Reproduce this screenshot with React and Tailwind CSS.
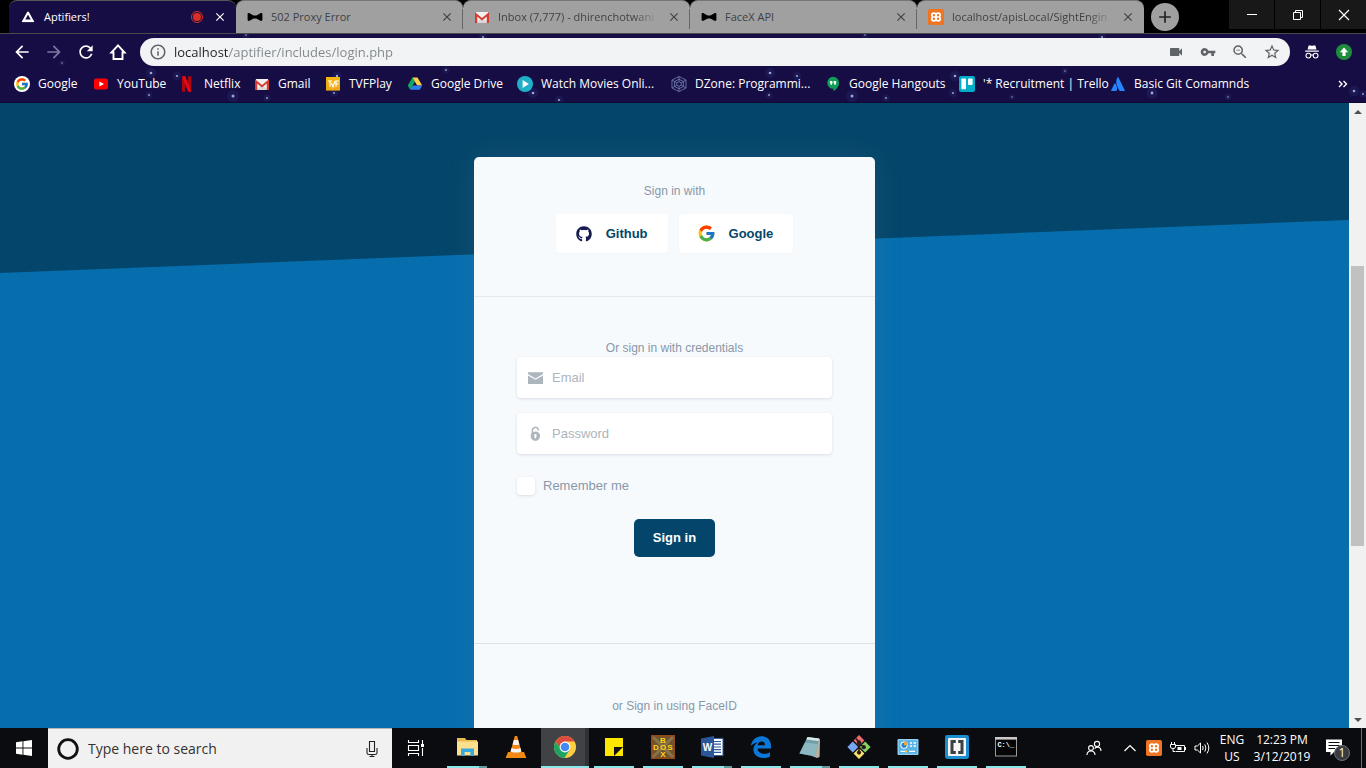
import React from "react";
import {
  MdArrowBack,
  MdArrowForward,
  MdRefresh,
  MdInfoOutline,
  MdVideocam,
  MdVpnKey,
  MdZoomOut,
  MdStarBorder,
  MdClose,
  MdAdd,
} from "react-icons/md";
import { FcGoogle } from "react-icons/fc";
import { FaGithub, FaAtlassian } from "react-icons/fa";

/* ---------- favicons ---------- */

function AptifiersIcon() {
  return (
    <svg viewBox="0 0 16 16" className="size-4">
      <path d="M8 3.6 L12.4 11.6 H3.6 Z" fill="none" stroke="#fff" strokeWidth="2" strokeLinejoin="round" />
      <path d="M2 12.3 H14" stroke="#fff" strokeWidth="1.6" />
    </svg>
  );
}

function BowTieIcon() {
  return (
    <svg viewBox="0 0 16 16" className="size-4">
      <path d="M0.6 5.2 C0.6 4 2 3.9 3 4.4 L6.6 6.4 H9.4 L13 4.4 C14 3.9 15.4 4 15.4 5.2 V10.8 C15.4 12 14 12.1 13 11.6 L9.4 9.6 H6.6 L3 11.6 C2 12.1 0.6 12 0.6 10.8 Z" fill="#000" />
    </svg>
  );
}

function GmailIcon() {
  return (
    <svg viewBox="0 0 16 16" className="size-4">
      <path d="M2 3 H14 V14 H2 Z" fill="#f1f1f1" />
      <path d="M2 14 L8 8.5 L14 14 Z" fill="#d9d9d9" />
      <path d="M1 14 V3.2 L8 9 L15 3.2 V14 H12.8 V7.4 L8 11.4 L3.2 7.4 V14 Z" fill="#d93a2f" />
    </svg>
  );
}

function XamppIcon() {
  return (
    <svg viewBox="0 0 16 16" className="size-4">
      <rect width="16" height="16" rx="1.8" fill="#ee7623" />
      <g fill="none" stroke="#fff" strokeWidth="1.7">
        <path d="M7.8 8 H5.6 M8.2 8 H10.4" />
        <path d="M8 8 V6.2 Q8 4.2 5.9 4.2 Q3.8 4.2 3.8 6 Q3.8 7.2 4.8 8 Q3.8 8.8 3.8 10 Q3.8 11.8 5.9 11.8 Q8 11.8 8 9.8 Z" />
        <path d="M8 8 V6.2 Q8 4.2 10.1 4.2 Q12.2 4.2 12.2 6 Q12.2 7.2 11.2 8 Q12.2 8.8 12.2 10 Q12.2 11.8 10.1 11.8 Q8 11.8 8 9.8 Z" />
      </g>
    </svg>
  );
}

function RecordIcon() {
  return (
    <svg viewBox="0 0 14 14" className="size-3.5">
      <circle cx="7" cy="7" r="5.5" fill="none" stroke="#d93025" strokeWidth="1" />
      <circle cx="7" cy="7" r="4" fill="#d93025" />
    </svg>
  );
}

function GoogleBadge() {
  return (
    <span className="flex size-4 items-center justify-center rounded-full bg-white">
      <FcGoogle size={14} />
    </span>
  );
}

function YouTubeIcon() {
  return (
    <svg viewBox="0 0 16 16" className="size-4">
      <rect x="1" y="2.4" width="14" height="11.2" rx="2.4" fill="#f00" />
      <path d="M6.4 5.4 L11 8 L6.4 10.6 Z" fill="#fff" />
    </svg>
  );
}

function NetflixIcon() {
  return (
    <svg viewBox="0 0 16 16" className="size-4">
      <path d="M2 0.3 H5.3 V15.4 L2 15.8 Z M8.1 0.3 H11.3 V15.8 L8.1 15.4 Z" fill="#b1060f" />
      <path d="M2 0.3 H5.3 L11.3 15.8 L8.1 15.4 Z" fill="#e50914" />
    </svg>
  );
}

function TvfIcon() {
  return (
    <svg viewBox="0 0 16 16" className="size-4">
      <rect x="1" y="1" width="14" height="13.5" fill="#f5b50f" />
      <path d="M1 4.5 V14.5 H15 V11 Z" fill="#e8951b" opacity="0.4" />
      <path d="M3 5 H7 M5 5 V11 M6.5 7 L8 11 L10 5 M11 11 V5 H14 M11 8 H13.4" fill="none" stroke="#fff" strokeWidth="1.2" />
    </svg>
  );
}

function DriveIcon() {
  return (
    <svg viewBox="0 0 16 16" className="size-4">
      <path d="M5.4 1.5 L0.8 9.6 L3.2 13.8 L7.9 5.8 Z" fill="#11a861" />
      <path d="M5.4 1.5 H10.5 L15.2 9.6 H10.2 Z" fill="#ffcf48" />
      <path d="M5.7 9.6 H15.2 L12.8 13.8 H3.2 Z" fill="#2d7ff0" />
    </svg>
  );
}

function PlayIcon() {
  return (
    <svg viewBox="0 0 16 16" className="size-4">
      <circle cx="8" cy="8" r="8" fill="#1fb0c8" />
      <path d="M5.6 4 L11.8 8 L5.6 12 Z" fill="#fff" />
    </svg>
  );
}

function DZoneIcon() {
  return (
    <svg viewBox="0 0 16 16" className="size-4">
      <g fill="none" stroke="#6b78ad" strokeWidth="0.9">
        <path d="M8 0.5 L15 4 V12 L8 15.5 L1 12 V4 Z" />
        <path d="M8 3.2 L12.4 5.5 V10.5 L8 12.8 L3.6 10.5 V5.5 Z" />
        <path d="M8 5.6 L10.2 6.8 V9.2 L8 10.4 L5.8 9.2 V6.8 Z M8 0.5 V5.6 M1 4 L5.8 6.8 M15 4 L10.2 6.8 M1 12 L5.8 9.2 M15 12 L10.2 9.2 M8 10.4 V15.5" />
      </g>
    </svg>
  );
}

function HangoutsIcon() {
  return (
    <svg viewBox="0 0 16 16" className="size-4">
      <path d="M8 0.8 A6 6 0 0 1 14 6.9 C14 10.6 11.4 13.4 8.4 15.2 V12.8 A6 6 0 0 1 8 0.8 Z" fill="#109d58" />
      <path d="M4.9 5 H7.4 V7.4 L6.4 9 H5.4 L6 7.4 H4.9 Z M8.6 5 H11.1 V7.4 L10.1 9 H9.1 L9.7 7.4 H8.6 Z" fill="#fff" />
    </svg>
  );
}

function TrelloIcon() {
  return (
    <svg viewBox="0 0 16 16" className="size-4">
      <rect width="16" height="16" rx="2" fill="#00aecc" />
      <rect x="2.4" y="2.4" width="4.6" height="10.8" rx="0.8" fill="#fff" />
      <rect x="9" y="2.4" width="4.6" height="6.6" rx="0.8" fill="#fff" />
    </svg>
  );
}

/* ---------- tab strip ---------- */

const TABS = [
  { title: "Aptifiers!", icon: <AptifiersIcon />, active: true },
  { title: "502 Proxy Error", icon: <BowTieIcon /> },
  { title: "Inbox (7,777) - dhirenchotwani", icon: <GmailIcon />, fade: true },
  { title: "FaceX API", icon: <BowTieIcon /> },
  { title: "localhost/apisLocal/SightEngin", icon: <XamppIcon />, fade: true },
];

function Tab({ tab, divider }) {
  const look = tab.active
    ? "rounded-t-lg border-t border-[#555] bg-[#170d45] text-white"
    : "rounded-t-lg border-t border-[#777] bg-[#a0a0a0] text-[#3f4144]";
  return (
    <div className={"min-w-0 flex-1 " + look}>
      <div className={"flex h-full items-center " + (divider ? "bg-[linear-gradient(#666,#666)] bg-[length:1px_20px] bg-[position:right_8px] bg-no-repeat" : "")}>
        <span className="ml-[11px] flex w-6 shrink-0">{tab.icon}</span>
        <span className={"min-w-0 flex-1 whitespace-nowrap text-[11px] leading-4 " + (tab.fade ? "mask-[linear-gradient(90deg,#000_85%,transparent)]" : "")}>
          {tab.title}
        </span>
        {tab.active && <RecordIcon />}
        <button aria-label={"Close " + tab.title} className="mr-2 ml-2 flex size-4 shrink-0 items-center justify-center">
          <MdClose size={14} />
        </button>
      </div>
    </div>
  );
}

function WindowControls() {
  const cls = "flex h-[29px] w-[45px] items-center justify-center bg-[#181818]";
  return (
    <div className="ml-auto flex shrink-0 gap-px">
      <button aria-label="Minimize" className={cls}>
        <svg viewBox="0 0 12 12" className="size-3"><path d="M1 5.5 H11" stroke="#fff" /></svg>
      </button>
      <button aria-label="Restore" className={cls}>
        <svg viewBox="0 0 12 12" className="size-3"><path d="M1.5 3.5 H8.5 V10.5 H1.5 Z M3.5 3.5 V1.5 H10.5 V8.5 H8.5" fill="none" stroke="#fff" /></svg>
      </button>
      <button aria-label="Close window" className={cls}>
        <svg viewBox="0 0 12 12" className="size-3"><path d="M1 1 L11 11 M11 1 L1 11" stroke="#fff" strokeWidth="1.2" /></svg>
      </button>
    </div>
  );
}

function TabStrip() {
  return (
    <div className="flex h-[34px] shrink-0 items-start border-b border-[#4a4a4a] bg-black pl-[9px]">
      <div className="flex h-full max-w-[1135px] min-w-0 flex-1">
        {TABS.map((t, i) => (
          <Tab key={t.title} tab={t} divider={i > 0 && i < TABS.length - 1} />
        ))}
      </div>
      <button aria-label="New tab" className="mt-[3px] ml-[7px] flex size-7 shrink-0 items-center justify-center rounded-full bg-[#a0a0a0] text-[#222]">
        <MdAdd size={20} />
      </button>
      <WindowControls />
    </div>
  );
}

/* ---------- toolbar ---------- */

const STARS = [
  [151, 39, 1.3], [177, 42, 1.1], [149, 61, 0.9], [233, 62, 1.5], [267, 64, 0.9], [337, 42, 1.2], [334, 59, 0.9],
  [446, 36, 0.9], [483, 3, 1], [533, 59, 1.3], [559, 66, 1.1], [770, 39, 1.3], [797, 42, 1.1], [769, 61, 0.9],
  [852, 62, 1.5], [886, 64, 0.9], [865, 1, 0.8], [955, 42, 1.3], [953, 59, 1], [1065, 37, 0.8], [1012, 63, 0.7],
  [1102, 3, 1], [1152, 59, 1.4], [1228, 63, 0.8], [1354, 57, 1.3], [1363, 60, 0.9], [246, 1, 0.8], [62, 29, 0.7],
];

function Stars() {
  return (
    <svg className="pointer-events-none absolute inset-0 h-full w-full" aria-hidden="true">
      {STARS.map(([x, y, r]) => (
        <g key={x + "-" + y}>
          <circle cx={x} cy={y} r={r * 4} fill="#3457a8" opacity="0.15" />
          <circle cx={x} cy={y} r={r} fill="#b9c0e6" opacity="0.85" />
        </g>
      ))}
    </svg>
  );
}

function ToolButton({ label, children, dim }) {
  return (
    <button aria-label={label} className={"flex h-7 w-8 shrink-0 items-center justify-center " + (dim ? "text-[#7d78a0]" : "text-white")}>
      {children}
    </button>
  );
}

function OmniButton({ label, children }) {
  return (
    <button aria-label={label} className="flex h-7 w-8 shrink-0 items-center justify-center text-[#5f6368]">
      {children}
    </button>
  );
}

function Toolbar() {
  return (
    <div className="relative flex items-center gap-1.5 px-1.5 pt-1">
      <div className="flex">
        <ToolButton label="Back"><MdArrowBack size={20} /></ToolButton>
        <ToolButton label="Forward" dim><MdArrowForward size={20} /></ToolButton>
        <ToolButton label="Reload"><MdRefresh size={20} /></ToolButton>
        <ToolButton label="Home">
          <svg viewBox="0 0 18 18" className="size-[18px]">
            <path d="M9 2.4 L2.4 9.5 H4.5 V16 H13.5 V9.5 H15.6 Z" fill="none" stroke="#fff" strokeWidth="1.9" />
          </svg>
        </ToolButton>
      </div>
      <div className="flex h-7 min-w-0 flex-1 items-center rounded-full bg-[#f1f3f4] pr-0.5">
        <span className="flex w-[34px] shrink-0 pl-[9px] text-[#5f6368]"><MdInfoOutline size={18} /></span>
        <input
          aria-label="Address"
          defaultValue="localhost/aptifier/includes/login.php"
          className="min-w-0 flex-1 bg-[linear-gradient(90deg,#202124_54px,#80868b_54px)] bg-clip-text text-[13px] leading-5 text-transparent outline-none"
        />
        <OmniButton label="Camera"><MdVideocam size={16} /></OmniButton>
        <OmniButton label="Saved passwords"><MdVpnKey size={16} /></OmniButton>
        <OmniButton label="Zoom out"><MdZoomOut size={18} /></OmniButton>
        <OmniButton label="Bookmark"><MdStarBorder size={18} /></OmniButton>
      </div>
      <div className="flex">
        <ToolButton label="Incognito">
          <svg viewBox="0 0 16 16" className="size-4">
            <path d="M4.6 1.5 H7 L8 2 L9 1.5 H11.4 L12.4 5.4 H3.6 Z M1.2 6.5 H14.8 V7.7 H1.2 Z" fill="#fff" />
            <g fill="none" stroke="#fff" strokeWidth="1.1">
              <circle cx="4.4" cy="11.6" r="2.4" />
              <circle cx="11.6" cy="11.6" r="2.4" />
              <path d="M6.8 11.2 Q8 10.4 9.2 11.2" />
            </g>
          </svg>
        </ToolButton>
        <ToolButton label="Update">
          <svg viewBox="0 0 16 16" className="size-4">
            <circle cx="8" cy="8" r="8" fill="#1e8e3e" />
            <path d="M8 3.6 L12.2 8.2 H9.6 V12 H6.4 V8.2 H3.8 Z" fill="#fff" />
          </svg>
        </ToolButton>
      </div>
    </div>
  );
}

const BOOKMARKS = [
  ["Google", <GoogleBadge />],
  ["YouTube", <YouTubeIcon />],
  ["Netflix", <NetflixIcon />],
  ["Gmail", <GmailIcon />],
  ["TVFPlay", <TvfIcon />],
  ["Google Drive", <DriveIcon />],
  ["Watch Movies Onli...", <PlayIcon />],
  ["DZone: Programmi...", <DZoneIcon />],
  ["Google Hangouts", <HangoutsIcon />],
  ["'* Recruitment | Trello", <TrelloIcon />],
  ["Basic Git Comamnds", <FaAtlassian size={14} color="#2684ff" className="mx-px" />],
];

function Bookmarks() {
  return (
    <nav aria-label="Bookmarks" className="relative flex h-9 items-center justify-between pr-[18px] pl-3.5">
      <div className="grid grid-cols-[79px_87px_74px_71px_82px_110px_154px_154px_134px_151px_150px] text-xs text-white">
        {BOOKMARKS.map(([label, icon]) => (
          <a key={label} href="#" className="flex items-center gap-2 whitespace-nowrap">
            <span className="shrink-0">{icon}</span>
            {label}
          </a>
        ))}
      </div>
      <button aria-label="More bookmarks" className="flex text-white">
        <svg viewBox="0 0 10 8" className="h-2 w-2.5">
          <path d="M1 1 L4 4 L1 7 M5.5 1 L8.5 4 L5.5 7" fill="none" stroke="#fff" strokeWidth="1.4" />
        </svg>
      </button>
    </nav>
  );
}

/* ---------- login page ---------- */

function SocialButton({ icon, children }) {
  return (
    <button className="flex h-[39px] items-center gap-3.5 rounded bg-white px-5 text-[13px] font-bold text-[#04466b] shadow-[0_1px_2px_rgba(50,50,93,0.03)]">
      <span className="flex size-4 items-center justify-center">{icon}</span>
      <span>{children}</span>
    </button>
  );
}

function Field({ id, type, label, icon }) {
  return (
    <div className="flex h-[41px] items-center rounded bg-white pl-[11px] text-[#adb5bd] shadow-[0_1px_3px_rgba(50,50,93,0.15)]">
      <label htmlFor={id} aria-label={label} className="flex w-6 shrink-0">{icon}</label>
      <input
        id={id}
        type={type}
        placeholder={label}
        className="h-full min-w-0 flex-1 bg-transparent text-[13px] outline-none placeholder:text-[#adb5bd]"
      />
    </div>
  );
}

function LoginCard() {
  return (
    <form
      onSubmit={(e) => e.preventDefault()}
      className="relative mx-auto w-full max-w-[401px] rounded-[5px] bg-[#f7fafc] text-center text-xs leading-[18px] text-[#8898aa] shadow-[0_0_29px_rgba(136,152,170,0.13)]"
    >
      <section className="border-b border-[#e6eaee] px-[43px] pt-[25px] pb-[43px]">
        <p>Sign in with</p>
        <div className="mt-3.5 flex justify-center gap-[11px]">
          <SocialButton icon={<FaGithub size={16} color="#161b50" />}>Github</SocialButton>
          <SocialButton icon={<FcGoogle size={19} className="shrink-0" />}>Google</SocialButton>
        </div>
      </section>
      <section className="border-b border-[#dde2e7] px-[43px] pt-[42px] pb-[86px]">
        <p>Or sign in with credentials</p>
        <div className="flex flex-col gap-[15px]">
          <Field
            id="email"
            type="email"
            label="Email"
            icon={
              <svg viewBox="0 0 16 16" className="size-4">
                <path d="M0 2.2 H15 V4 L7.5 8.4 L0 4 Z M0 5.4 L7.5 9.8 L15 5.4 V14 H0 Z" fill="#adb5bd" />
              </svg>
            }
          />
          <Field
            id="password"
            type="password"
            label="Password"
            icon={
              <svg viewBox="0 0 16 16" className="size-4">
                <path d="M4.4 8 V4.4 A3 3 0 0 1 10.3 3.6 V4.6" fill="none" stroke="#adb5bd" strokeWidth="1.5" />
                <path fillRule="evenodd" d="M7.4 5.4 A4.7 4.7 0 1 1 7.3 5.4 Z M7.4 8 A1.5 1.5 0 0 0 6.6 10.6 V12.2 H8.2 V10.6 A1.5 1.5 0 0 0 7.4 8 Z" fill="#adb5bd" />
              </svg>
            }
          />
        </div>
        <div className="mt-[22px] flex h-5 items-center gap-2">
          <input
            id="remember"
            type="checkbox"
            className="size-[18px] appearance-none rounded bg-white shadow-[0_1px_3px_rgba(50,50,93,0.15)] checked:bg-[#04466b]"
          />
          <label htmlFor="remember" className="text-[13px]">Remember me</label>
        </div>
        <button type="submit" className="mt-[23px] h-[38px] rounded-[5px] bg-[#04466b] px-[19px] text-[13px] font-bold text-white">
          Sign in
        </button>
      </section>
      <section className="px-[43px] pt-[53px] pb-20">
        <p>or Sign in using FaceID</p>
      </section>
    </form>
  );
}

function Scrollbar() {
  return (
    <div className="flex w-[17px] shrink-0 flex-col bg-[#f1f1f1] px-0.5">
      <button aria-label="Scroll up" className="flex h-[17px] items-center justify-center">
        <svg viewBox="0 0 8 4" className="h-1 w-2"><path d="M0 4 L4 0 L8 4 Z" fill="#505050" /></svg>
      </button>
      <div className="flex-[146]" />
      <div className="flex-[280] bg-[#c1c1c1]" />
      <div className="flex-[165]" />
      <button aria-label="Scroll down" className="flex h-[17px] items-center justify-center">
        <svg viewBox="0 0 8 4" className="h-1 w-2"><path d="M0 0 L4 4 L8 0 Z" fill="#505050" /></svg>
      </button>
    </div>
  );
}

/* ---------- taskbar ---------- */

function ExplorerIcon() {
  return (
    <svg viewBox="0 0 24 24" className="size-6">
      <path d="M2 3 H10 L11.5 5 H22 V20 H2 Z" fill="#e9b94f" />
      <path d="M2 6.5 H23 V20.5 H2 Z" fill="#fbe08d" />
      <path d="M6 21 V13.4 H19 V21 H15.4 V17 H9.6 V21 Z" fill="#38a8e0" />
    </svg>
  );
}

function VlcIcon() {
  return (
    <svg viewBox="0 0 24 24" className="size-6">
      <path d="M4 17 H20 L22.4 23 H1.6 Z" fill="#f08a13" />
      <path d="M10.8 1 H13.2 L18 18.4 Q12 21.4 6 18.4 Z" fill="#f3861a" />
      <path d="M9.9 5 H14.1 L15.3 9.4 Q12 10.8 8.6 9.4 Z M7.6 13 Q12 15.2 16.4 13 L17.3 16.4 Q12 18.8 6.6 16.4 Z" fill="#f4f4f4" />
    </svg>
  );
}

function ChromeIcon() {
  return (
    <svg viewBox="0 0 24 24" className="size-6">
      <circle cx="12" cy="12" r="11" fill="#ffcd41" />
      <path d="M2.47 6.5 A11 11 0 0 0 11.4 23 L16.76 14.75 L12 12 L7.24 14.75 Z" fill="#1da362" />
      <path d="M2.47 6.5 A11 11 0 0 1 21.53 6.5 H12 A5.5 5.5 0 0 0 6.6 11 Z" fill="#dd4b3e" />
      <path d="M2.47 6.5 L7.24 14.75 L12 12 L6.6 11 Z" fill="#1da362" />
      <path d="M3 5.7 L6.9 12.2 L12 6.5 Z" fill="#dd4b3e" />
      <circle cx="12" cy="12" r="5.4" fill="#fff" />
      <circle cx="12" cy="12" r="4.3" fill="#4688f1" />
    </svg>
  );
}

function StickyIcon() {
  return (
    <svg viewBox="0 0 24 24" className="size-6">
      <path d="M3 3 H21 V21 H3 Z" fill="#ffe600" />
      <path d="M12 12 H21 L12 21 Z" fill="#111" />
    </svg>
  );
}

function DosBoxIcon() {
  return (
    <svg viewBox="0 0 24 24" className="size-6">
      <rect width="24" height="24" fill="#8f4a1c" />
      <rect x="2" y="2" width="20" height="20" fill="#6b5533" />
      <path d="M2 2 L22 22 M22 2 L2 22" stroke="#8a7447" strokeWidth="3" />
      <g fill="#ffd21a" fontFamily="Liberation Sans, sans-serif" fontSize="8" fontWeight="bold" textAnchor="middle">
        <text x="12" y="7.5">B</text>
        <text x="5" y="14.8">D</text>
        <text x="12" y="14.8">O</text>
        <text x="19" y="14.8">S</text>
        <text x="12" y="22">X</text>
      </g>
    </svg>
  );
}

function WordIcon() {
  return (
    <svg viewBox="0 0 24 24" className="size-6">
      <rect x="12" y="3.4" width="11" height="17.2" fill="#fff" stroke="#2b579a" />
      <path d="M14 6.5 H21 M14 9.2 H21 M14 12 H21 M14 14.7 H21 M14 17.4 H21" stroke="#2b579a" strokeWidth="1.2" />
      <path d="M1 3.4 L14 1 V23 L1 20.6 Z" fill="#2b579a" />
      <text x="7.4" y="15.8" fill="#fff" fontFamily="Liberation Sans, sans-serif" fontSize="10" fontWeight="bold" textAnchor="middle">W</text>
    </svg>
  );
}

function EdgeIcon() {
  return (
    <svg viewBox="0 0 24 24" className="size-6">
      <path d="M1.8 11 C2.8 4.6 7.4 1.2 12.4 1.2 C18.6 1.2 22 5.4 22 11 V13.6 H8.6 C8.8 17.4 12 18.8 15 18.8 C17.4 18.8 19.4 18.2 21 17.2 V21.4 C19 22.4 16.6 23 14 23 C8.4 23 4.4 19.6 4.4 14.6 C4.4 11.4 6 8.8 8.8 7.4 C5.8 7.6 3.4 9 1.8 11 Z M8.8 10.2 H16 C16 7.8 14.8 6.4 12.6 6.4 C10.4 6.4 9 8 8.8 10.2 Z" fill="#0b78d7" fillRule="evenodd" />
    </svg>
  );
}

function NotepadIcon() {
  return (
    <svg viewBox="0 0 24 24" className="size-6">
      <path d="M19 3 L22 4 L21.6 22 L19 23 L14 21 Z" fill="#b9b2a2" />
      <path d="M9.5 2 L21 3.5 L17 21.4 L1.4 18.6 Z" fill="#6f9fab" />
      <path d="M9.5 2 L21 3.5 L20.4 6 L8.4 4.6 Z" fill="#dbe7e8" />
      <path d="M7 7.6 L19.4 9 L17 21.4 L1.4 18.6 Z" fill="#a9d3d8" opacity="0.5" />
    </svg>
  );
}

function GitIcon() {
  return (
    <svg viewBox="0 0 24 24" className="size-6">
      <path d="M12 0 L17.4 5.4 L12 10.8 L6.6 5.4 Z" fill="#f06b6b" />
      <path d="M5.8 6.6 L11.2 12 L5.8 17.4 L0.4 12 Z" fill="#7aa7f5" />
      <path d="M18.2 6.6 L23.6 12 L18.2 17.4 L12.8 12 Z" fill="#88d165" />
      <path d="M12 13.2 L17.4 18.6 L12 24 L6.6 18.6 Z" fill="#fbe36a" />
      <path d="M8.8 3.6 L12 7 V18.4 M12 8 L17 12.6" fill="none" stroke="#2a1a1a" strokeWidth="1.6" />
      <g fill="#2a1a1a">
        <circle cx="12" cy="7.4" r="2.1" />
        <circle cx="12" cy="17.6" r="2.1" />
        <circle cx="16.8" cy="12.2" r="2.1" />
      </g>
    </svg>
  );
}

function ControlPanelIcon() {
  return (
    <svg viewBox="0 0 24 24" className="size-6">
      <rect x="1.5" y="4" width="21" height="16" rx="1" fill="#8fd0f3" />
      <rect x="2.8" y="5.3" width="18.4" height="13.4" fill="#58b4e6" />
      <circle cx="8" cy="10.2" r="3.6" fill="#fff" />
      <circle cx="8" cy="10.2" r="2.6" fill="#1f86cf" />
      <path d="M8 10.2 V6.6 A3.6 3.6 0 0 1 11.6 10.2 Z" fill="#f3a33b" />
      <path d="M14 8 H16 M17.5 8 H20 M14 11 H16 M17.5 11 H20 M4.5 16.4 H11 M13 16.4 H19" stroke="#fff" strokeWidth="1.4" />
      <path d="M9 16.4 H11" stroke="#f8c93a" strokeWidth="2" />
    </svg>
  );
}

function BracketsIcon() {
  return (
    <svg viewBox="0 0 24 24" className="size-6">
      <rect width="24" height="24" rx="2.4" fill="#1d8fd1" />
      <rect x="3" y="3" width="18" height="18" rx="1" fill="#f6f6f6" />
      <path d="M10.8 6.6 H7 V17.4 H10.8 M13.2 6.6 H17 V17.4 H13.2" fill="none" stroke="#3c4043" strokeWidth="3" />
    </svg>
  );
}

function CmdIcon() {
  return (
    <svg viewBox="0 0 24 24" className="size-6">
      <rect x="1.5" y="2.5" width="21" height="18.5" fill="#050505" stroke="#9a9a9a" />
      <rect x="1" y="2" width="22" height="2.6" fill="#c9c9c9" />
      <text x="3.4" y="11.5" fill="#fff" fontFamily="Liberation Mono, monospace" fontSize="7" fontWeight="bold">C:\_</text>
    </svg>
  );
}

const APPS = [
  { name: "File Explorer", icon: <ExplorerIcon />, running: true, stacked: true },
  { name: "VLC media player", icon: <VlcIcon /> },
  { name: "Google Chrome", icon: <ChromeIcon />, active: true },
  { name: "Sticky Notes", icon: <StickyIcon />, running: true },
  { name: "DOSBox", icon: <DosBoxIcon />, running: true },
  { name: "Word", icon: <WordIcon />, running: true, stacked: true },
  { name: "Edge", icon: <EdgeIcon />, running: true },
  { name: "Notepad", icon: <NotepadIcon />, running: true, stacked: true },
  { name: "Git Bash", icon: <GitIcon />, running: true },
  { name: "Control Panel", icon: <ControlPanelIcon />, running: true },
  { name: "Brackets", icon: <BracketsIcon />, running: true },
  { name: "Command Prompt", icon: <CmdIcon />, running: true },
];

function AppButton({ app }) {
  return (
    <button
      aria-label={app.name}
      className={"flex h-10 w-12 shrink-0 flex-col items-center " + (app.active ? "bg-[linear-gradient(90deg,#414245_44px,#303134_44px)]" : "")}
    >
      <span className="flex flex-1 items-center justify-center">{app.icon}</span>
      <span className={"flex h-0.5 " + (app.active ? "w-full bg-[#8ae6e8]" : app.running ? "w-10 justify-end bg-[#8ae6e8]" : "w-10")}>
        {app.stacked && <span className="w-2 bg-[#5f9c9e]" />}
      </span>
    </button>
  );
}

function Taskbar() {
  const tray = "flex h-10 w-6 items-center justify-center";
  return (
    <footer className="flex h-10 shrink-0 items-center overflow-hidden bg-[#0b0c10] text-xs leading-[17px] text-white">
      <button aria-label="Start" className="flex h-10 w-12 shrink-0 items-center justify-center">
        <svg viewBox="0 0 16 16" className="size-4">
          <path d="M0 2.2 L6.5 1.3 V7.5 H0 Z M7.4 1.2 L16 0 V7.5 H7.4 Z M0 8.4 H6.5 V14.7 L0 13.8 Z M7.4 8.4 H16 V16 L7.4 14.8 Z" fill="#fff" />
        </svg>
      </button>
      <div className="flex h-10 w-[344px] shrink-0 items-center border-t border-[#b5b5b5] bg-[#f1f1f1] pr-3 pl-[9px]">
        <svg viewBox="0 0 22 22" className="size-[22px] shrink-0">
          <circle cx="11" cy="11" r="9.3" fill="none" stroke="#111" strokeWidth="2.8" />
        </svg>
        <input
          aria-label="Type here to search"
          placeholder="Type here to search"
          className="ml-[9px] min-w-0 flex-1 text-sm text-[#333] outline-none placeholder:text-[#333]"
        />
        <button aria-label="Voice search" className="flex">
          <svg viewBox="0 0 16 18" className="h-[18px] w-4">
            <path d="M5.5 1.5 H10.5 V11.5 H5.5 Z M3 8 V13 Q3 14.5 5 14.5 H11 Q13 14.5 13 13 V8 M8 14.5 V16.5 M5.5 16.5 H10.5" fill="none" stroke="#222" strokeWidth="1.1" />
          </svg>
        </button>
      </div>
      <button aria-label="Task view" className="mr-0.5 flex h-10 w-12 shrink-0 items-center justify-center">
        <svg viewBox="0 0 18 16" className="h-4 w-[18px]">
          <path d="M1.5 0 V2.5 H11.5 V0 M1.5 5.5 H11.5 V10.5 H1.5 Z M1.5 16 V13.5 H11.5 V16 M15.5 0 V4 M15.5 8 V16" fill="none" stroke="#fff" strokeWidth="1.1" />
          <path d="M14 4 H17 V7 H14 Z" fill="#fff" />
        </svg>
      </button>
      <div className="ml-px flex gap-px">
        {APPS.map((a) => <AppButton key={a.name} app={a} />)}
      </div>
      <div className="flex-1" />
      <div className="flex shrink-0 items-center">
        <button aria-label="People" className="mr-2 flex h-10 w-8 items-center justify-center">
          <svg viewBox="0 0 16 16" className="size-4">
            <g fill="none" stroke="#fff" strokeWidth="1.1">
              <circle cx="11" cy="4" r="2.6" />
              <circle cx="5" cy="8" r="2.4" />
              <path d="M1 15 C1 9.6 9 9.6 9 15 M8.6 8.6 C10.6 6 15 7 15 11" />
            </g>
          </svg>
        </button>
        <button aria-label="Hidden icons" className={tray}>
          <svg viewBox="0 0 14 8" className="h-2 w-3.5"><path d="M1.5 7 L7 1.5 L12.5 7" fill="none" stroke="#fff" strokeWidth="1.2" /></svg>
        </button>
        <button aria-label="XAMPP" className={tray}><XamppIcon /></button>
        <button aria-label="Battery" className={tray}>
          <svg viewBox="0 0 16 14" className="h-3.5 w-4">
            <path d="M6 4.5 H14.5 V10.5 H5.5 M15.5 6 V9 M1.5 1 V3.5 M4.5 1 V3.5 M0.5 3.5 H5.5 V6 Q5.5 7.5 3 7.5 Q0.5 7.5 0.5 6 Z M3 7.5 V10.5 H5" fill="none" stroke="#fff" />
            <path d="M7.5 6 H11.5 V9 H7.5 Z" fill="#fff" />
          </svg>
        </button>
        <button aria-label="Volume" className={tray}>
          <svg viewBox="0 0 17 14" className="h-3.5 w-[17px]">
            <path d="M1 5 H3.4 L6.5 2 V12 L3.4 9 H1 Z M8.6 5 Q9.8 7 8.6 9 M10.8 3.4 Q13 7 10.8 10.6 M13 1.6 Q16.6 7 13 12.4" fill="none" stroke="#fff" />
          </svg>
        </button>
        <button className="w-9 text-center">ENG<br />US</button>
        <button className="w-16 text-center whitespace-nowrap">12:23 PM<br />3/12/2019</button>
        <button aria-label="Notifications" className="flex h-10 w-12 items-center justify-center border-r border-[#6b6b6b]">
          <svg viewBox="0 0 26 26" className="size-[26px]">
            <path d="M1 4.5 H17 V17 H9 L5.5 20.5 V17 H1 Z" fill="#fff" />
            <path d="M3.5 7.5 H14.5 M3.5 10.5 H14.5 M3.5 13.5 H10" stroke="#0b0c10" />
            <circle cx="17" cy="18" r="7.5" fill="#3a3b3e" stroke="#707174" />
            <text x="17" y="22" fill="#fff" fontSize="12" textAnchor="middle">1</text>
          </svg>
        </button>
        <span className="w-1" />
      </div>
    </footer>
  );
}

export default function App() {
  return (
    <div className="flex h-screen flex-col overflow-hidden font-['Open_Sans','Noto_Sans',sans-serif]">
      <TabStrip />
      <header className="relative shrink-0 border-b border-[#0c0a2e] bg-[#170d45]">
        <Stars />
        <Toolbar />
        <Bookmarks />
      </header>
      <div className="flex min-h-0 flex-1">
        <main className="relative min-w-0 flex-1 overflow-hidden bg-[#076eae] pt-[54px] font-['Liberation_Sans',Arial,sans-serif]">
          <div className="absolute inset-0 bg-[#04466b] [clip-path:polygon(0_0,100%_0,100%_117px,0_170px)]" />
          <LoginCard />
        </main>
        <Scrollbar />
      </div>
      <Taskbar />
    </div>
  );
}
